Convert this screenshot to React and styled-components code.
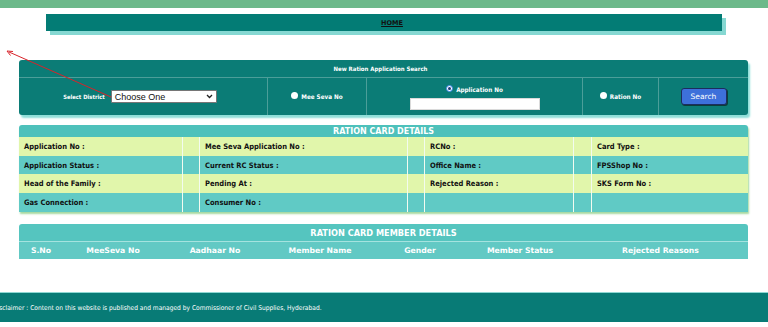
import React from "react";
import styled, { createGlobalStyle } from "styled-components";

const Global = createGlobalStyle`
  html, body { margin: 0; padding: 0; background: #ffffff; }
  body { font-family: "DejaVu Sans", Verdana, sans-serif; width: 768px; height: 327px; overflow: hidden; }
  #root { position: relative; }
`;

const Page = styled.div`
  position: relative;
  width: 768px;
  height: 327px;
  display: flex;
  flex-direction: column;
`;

const TopBand = styled.div`
  height: 8px;
  background: #6cb98a;
`;

const HomeBar = styled.nav`
  margin: 6px 0 0 46px;
  width: 676px;
  height: 17px;
  background: #037c75;
  box-shadow: 4px 4px 0 #86d8d2;
  display: flex;
  align-items: center;
  justify-content: center;
`;

const HomeLink = styled.a`
  font-family: "DejaVu Sans", Verdana, sans-serif;
  font-weight: bold;
  font-size: 6.5px;
  color: #111;
  text-decoration: underline;
  margin-left: 16px;
`;

const SearchPanel = styled.section`
  margin: 29px 20px 0 19px;
  height: 55px;
  background: #0b7c76;
  border-radius: 3px;
  box-shadow: 2px 3px 2px #8fdfd9;
  display: flex;
  flex-direction: column;
`;

const PanelTitle = styled.div`
  height: 17px;
  border-bottom: 1px solid #4c9e99;
  display: flex;
  align-items: center;
  justify-content: center;
  font-family: "DejaVu Sans Condensed", "DejaVu Sans", sans-serif;
  font-weight: bold;
  font-size: 6px;
  color: #fff;
  padding-right: 6px;
`;

const PanelRow = styled.div`
  flex: 1;
  display: grid;
  grid-template-columns: 249px 99px 216px 76px 1fr;
`;

const PanelCell = styled.div`
  display: flex;
  flex-direction: ${(p) => (p.$stack ? "column" : "row")};
  align-items: center;
  justify-content: center;
  gap: ${(p) => (p.$stack ? "5px" : "6px")};
  border-right: ${(p) => (p.$last ? "none" : "1px solid #4c9e99")};
  padding-top: ${(p) => (p.$stack ? "2px" : "0")};
  padding-right: ${(p) => (p.$shift ? "6px" : "0")};
`;

const Label = styled.span`
  font-family: "DejaVu Sans Condensed", "DejaVu Sans", sans-serif;
  font-weight: bold;
  font-size: ${(p) => (p.$small ? "5.8px" : "6.3px")};
  color: #fff;
`;

const Select = styled.div`
  width: 106px;
  height: 13px;
  background: #fff;
  border: 1px solid #767676;
  border-radius: 1px;
  display: flex;
  align-items: center;
  justify-content: space-between;
  padding: 0 3px;
  box-sizing: border-box;
  font-family: "Liberation Sans", Arial, sans-serif;
  font-size: 9px;
  color: #111;
`;

const Radio = styled.span`
  width: 7px;
  height: 7px;
  border-radius: 50%;
  box-sizing: border-box;
  background: #fff;
  border: ${(p) => (p.$checked ? "1.5px solid #3f86ea" : "none")};
  display: inline-flex;
  align-items: center;
  justify-content: center;
  margin-top: -2px;
  &::after {
    content: "";
    width: 3px;
    height: 3px;
    border-radius: 50%;
    background: ${(p) => (p.$checked ? "#1d3c78" : "transparent")};
  }
`;

const RadioLine = styled.div`
  display: flex;
  align-items: center;
  gap: 3px;
`;

const TextInput = styled.div`
  width: 130px;
  height: 12px;
  background: #fff;
  border: 1px solid #dadada;
  box-sizing: border-box;
`;

const SearchButton = styled.button`
  width: 46px;
  height: 17px;
  background: #3d70da;
  border: 1px solid #1b2d5e;
  border-radius: 3px;
  color: #fff;
  font-family: "DejaVu Sans", Verdana, sans-serif;
  font-size: 7.5px;
  padding: 0;
  box-shadow: 1px 1px 0 #0c3d3a;
`;

const DetailsTable = styled.section`
  margin: 10px 20px 0 19px;
  border-radius: 3px 3px 0 0;
  overflow: hidden;
  box-shadow: 1px 2px 2px #a6d9a1;
  display: grid;
  grid-template-columns: 164px 17px 208px 17px 149px 18px 1fr;
  grid-template-rows: 12px 19px 18px 19px 19px;
`;

const TableTitle = styled.div`
  grid-column: 1 / -1;
  background: #4ec1bb;
  color: #fff;
  font-family: "DejaVu Sans", Verdana, sans-serif;
  font-weight: bold;
  font-size: 8px;
  display: flex;
  align-items: center;
  justify-content: center;
`;

const DCell = styled.div`
  background: ${(p) => (p.$alt ? "#60cac5" : "#e1f6ab")};
  border-right: ${(p) => (p.$last ? "none" : "1px solid #f3fbf0")};
  display: flex;
  align-items: center;
  padding-left: 5px;
  font-family: "DejaVu Sans Condensed", "DejaVu Sans", sans-serif;
  font-weight: bold;
  font-size: 7.5px;
  color: #111;
  white-space: nowrap;
`;

const MemberTable = styled.section`
  margin: 12px 20px 0 19px;
  border-radius: 3px 3px 0 0;
  overflow: hidden;
  display: flex;
  flex-direction: column;
`;

const MemberTitle = styled.div`
  height: 17px;
  background: #55c5bf;
  border-bottom: 1px solid #a5e3df;
  display: flex;
  align-items: center;
  justify-content: center;
  color: #fff;
  font-family: "DejaVu Sans", Verdana, sans-serif;
  font-weight: bold;
  font-size: 8.2px;
`;

const MemberHead = styled.div`
  height: 17px;
  background: #62c9c4;
  display: grid;
  grid-template-columns: 44px 100px 104px 106px 94px 106px 1fr;
`;

const MHCell = styled.div`
  display: flex;
  align-items: center;
  justify-content: center;
  color: #fff;
  font-family: "DejaVu Sans", Verdana, sans-serif;
  font-weight: bold;
  font-size: 7.7px;
  white-space: nowrap;
`;

const Footer = styled.footer`
  margin-top: 33px;
  height: 29px;
  background: #087b76;
  border-top: 1px solid #8fd8d3;
  display: flex;
  align-items: center;
  overflow: hidden;
`;

const FooterText = styled.p`
  margin: 0 0 0 -7px;
  font-family: "DejaVu Sans Condensed", "DejaVu Sans", sans-serif;
  font-size: 6.6px;
  color: #fff;
  white-space: nowrap;
`;

const ArrowOverlay = styled.svg`
  position: absolute;
  left: 0;
  top: 0;
  pointer-events: none;
`;

const Chevron = () => (
  <svg width="7" height="5" viewBox="0 0 7 5">
    <path d="M1 1 L3.5 3.5 L6 1" fill="none" stroke="#222" strokeWidth="1.3" />
  </svg>
);

const rows = [
  ["Application No :", "Mee Seva Application No :", "RCNo :", "Card Type :"],
  ["Application Status :", "Current RC Status :", "Office Name :", "FPSShop No :"],
  ["Head of the Family :", "Pending At :", "Rejected Reason :", "SKS Form No :"],
  ["Gas Connection :", "Consumer No :", "", ""],
];

const memberCols = ["S.No", "MeeSeva No", "Aadhaar No", "Member Name", "Gender", "Member Status", "Rejected Reasons"];

export default function App() {
  return (
    <>
      <Global />
      <Page>
        <TopBand />
        <HomeBar>
          <HomeLink>HOME</HomeLink>
        </HomeBar>

        <SearchPanel>
          <PanelTitle>New Ration Application Search</PanelTitle>
          <PanelRow>
            <PanelCell $shift>
              <Label $small>Select District</Label>
              <Select>
                <span>Choose One</span>
                <Chevron />
              </Select>
            </PanelCell>
            <PanelCell>
              <RadioLine>
                <Radio />
                <Label>Mee Seva No</Label>
              </RadioLine>
            </PanelCell>
            <PanelCell $stack>
              <RadioLine>
                <Radio $checked />
                <Label>Application No</Label>
              </RadioLine>
              <TextInput />
            </PanelCell>
            <PanelCell>
              <RadioLine>
                <Radio />
                <Label>Ration No</Label>
              </RadioLine>
            </PanelCell>
            <PanelCell $last>
              <SearchButton>Search</SearchButton>
            </PanelCell>
          </PanelRow>
        </SearchPanel>

        <DetailsTable>
          <TableTitle>RATION CARD DETAILS</TableTitle>
          {rows.map((r, i) => (
            <React.Fragment key={i}>
              <DCell $alt={i % 2 === 1}>{r[0]}</DCell>
              <DCell $alt={i % 2 === 1} />
              <DCell $alt={i % 2 === 1}>{r[1]}</DCell>
              <DCell $alt={i % 2 === 1} />
              <DCell $alt={i % 2 === 1}>{r[2]}</DCell>
              <DCell $alt={i % 2 === 1} />
              <DCell $alt={i % 2 === 1} $last>{r[3]}</DCell>
            </React.Fragment>
          ))}
        </DetailsTable>

        <MemberTable>
          <MemberTitle>RATION CARD MEMBER DETAILS</MemberTitle>
          <MemberHead>
            {memberCols.map((c) => (
              <MHCell key={c}>{c}</MHCell>
            ))}
          </MemberHead>
        </MemberTable>

        <Footer>
          <FooterText>
            Disclaimer : Content on this website is published and managed by Commissioner of Civil Supplies, Hyderabad.
          </FooterText>
        </Footer>

        <ArrowOverlay width="768" height="327" viewBox="0 0 768 327">
          <line x1="111" y1="97" x2="9" y2="52" stroke="#d8232a" strokeWidth="1" />
          <path d="M7 51 L13 51.5 M7 51 L10.5 55.5" stroke="#d8232a" strokeWidth="1" fill="none" />
        </ArrowOverlay>
      </Page>
    </>
  );
}
